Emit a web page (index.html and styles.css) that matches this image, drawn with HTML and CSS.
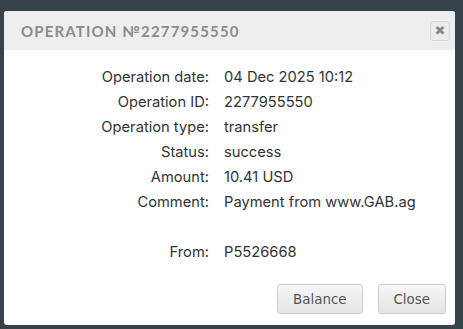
FILE: index.html
```html
<!DOCTYPE html>
<html lang="en">
<head>
  <meta charset="UTF-8">
  <title>Operation</title>
  <link rel="stylesheet" href="styles.css">
</head>
<body>

<div class="dialog">
  <div class="dialog-head">
    <span class="dialog-title">OPERATION №2277955550</span>
    <button class="close-x">✖</button>
  </div>

  <div class="dialog-body">
    <div class="info">
      <span class="label">Operation date:</span><span class="value">04 Dec 2025 10:12</span>
      <span class="label">Operation ID:</span><span class="value">2277955550</span>
      <span class="label">Operation type:</span><span class="value">transfer</span>
      <span class="label">Status:</span><span class="value">success</span>
      <span class="label">Amount:</span><span class="value">10.41 USD</span>
      <span class="label">Comment:</span><span class="value">Payment from www.GAB.ag</span>
      <span class="label"></span><span class="value"></span>
      <span class="label">From:</span><span class="value">P5526668</span>
    </div>
  </div>

  <div class="dialog-foot">
    <button class="btn">Balance</button>
    <button class="btn">Close</button>
  </div>
</div>

</body>
</html>
```

FILE: styles.css
```css
html, body {
  height: 100%;
}
body {
  margin: 0;
  padding: 11px 8px 4px 4px;
  box-sizing: border-box;
  background: #36434b;
  font-family: Inter, "Open Sans", sans-serif;
}
.dialog {
  background: #fff;
  border-radius: 3px;
  height: 314px;
  display: flex;
  flex-direction: column;
  overflow: hidden;
}
.dialog-head {
  background: #eeeeee;
  height: 39px;
  display: flex;
  align-items: center;
  justify-content: space-between;
  padding: 0 5px 0 17px;
}
.dialog-title {
  font-family: Lato, sans-serif;
  font-size: 15px;
  font-weight: 700;
  letter-spacing: 1.15px;
  color: #8f8b85;
}
.close-x {
  width: 20px;
  height: 20px;
  padding: 0;
  border: 1px solid #d6d6d6;
  border-radius: 3px;
  background: #ececec;
  color: #888;
  font-size: 13px;
  line-height: 18px;
  font-family: "DejaVu Sans", sans-serif;
}
.dialog-body {
  flex: 1;
  padding-top: 14px;
}
.info {
  display: grid;
  grid-template-columns: 205px auto;
  column-gap: 15px;
  grid-auto-rows: 25px;
  align-items: center;
  font-size: 14.7px;
  color: #333;
}
.label {
  text-align: right;
}
.dialog-foot {
  display: flex;
  justify-content: flex-end;
  gap: 15px;
  padding: 0 9px 11px 0;
}
.btn {
  height: 30px;
  padding: 0 15px;
  border: 1px solid #cccccc;
  border-radius: 3px;
  background: linear-gradient(#f7f7f7, #e4e4e4);
  color: #555;
  font-family: "DejaVu Sans", sans-serif;
  font-size: 13.4px;
}
```
